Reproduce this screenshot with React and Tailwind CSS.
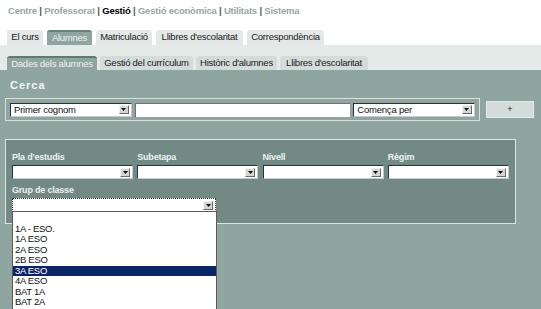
import React from "react";

const NAV = [
  { label: "Centre" },
  { label: "Professorat" },
  { label: "Gestió", active: true },
  { label: "Gestió econòmica" },
  { label: "Utilitats" },
  { label: "Sistema" },
];

const TABS = [
  { label: "El curs", w: "w-[36px]" },
  { label: "Alumnes", w: "w-[45px]", active: true },
  { label: "Matriculació", w: "w-[56px]" },
  { label: "Llibres d'escolaritat", w: "w-[87px]" },
  { label: "Correspondència", w: "w-[77px]" },
];

const SUBTABS = [
  { label: "Dades dels alumnes", w: "w-[90px]", active: true },
  { label: "Gestió del currículum", w: "w-[93px]" },
  { label: "Històric d'alumnes", w: "w-[81px]" },
  { label: "Llibres d'escolaritat", w: "w-[88px]" },
];

const GRUPS = ["", "1A - ESO.", "1A ESO", "2A ESO", "2B ESO", "3A ESO", "4A ESO", "BAT 1A", "BAT 2A", "BAT 1A"];

const Arrow = () => (
  <span className="flex items-center justify-center w-[10px] h-[9px] bg-[#d4d6d2] border-t border-l border-t-[#f0f0f0] border-l-[#f0f0f0] border-b border-r border-b-[#6a6a6a] border-r-[#6a6a6a] shrink-0">
    <svg width="5" height="3" viewBox="0 0 5 3">
      <path d="M0 0h5L2.5 3z" fill="#111" />
    </svg>
  </span>
);

const Select = ({ value = "", className = "", dotted = false }) => (
  <div
    className={`h-[14px] bg-white flex items-center justify-between pl-[3px] pr-[2px] text-[9.5px] tracking-[-0.2px] text-[#111] ${
      dotted
        ? "border border-dotted border-[#2a3258]"
        : "border-t border-l border-t-[#26304e] border-l-[#26304e] border-b border-r border-b-[#c4ccc9] border-r-[#c4ccc9]"
    } ${className}`}
  >
    <span className="leading-none">{value}</span>
    <Arrow />
  </div>
);

export default function App() {
  return (
    <div className="relative w-[541px] h-[309px] overflow-hidden bg-[#8fa5a0] font-['Liberation_Sans',Arial,sans-serif]">
      {/* header */}
      <div className="bg-white h-[45px] flex flex-col justify-between pt-[5px] px-[7px]">
        <div className="pl-[1px] text-[9.5px] font-bold tracking-[-0.2px] leading-[12px] text-[#93aaa4]">
          {NAV.map((n, i) => (
            <React.Fragment key={n.label}>
              {i > 0 && <span className="text-[#555]"> | </span>}
              <span className={n.active ? "text-black" : ""}>{n.label}</span>
            </React.Fragment>
          ))}
        </div>
        <div className="flex items-end gap-[4px]">
          {TABS.map((t) => (
            <div
              key={t.label}
              className={`${t.w} h-[15px] flex items-center justify-center rounded-t-[3px] text-[9.5px] tracking-[-0.25px] whitespace-nowrap ${
                t.active
                  ? "bg-[#8fa59f] text-[#eef2f1] border-t-2 border-[#6c817c]"
                  : "bg-[#e4e9e7] text-[#1a1a1a]"
              }`}
            >
              {t.label}
            </div>
          ))}
        </div>
      </div>

      {/* subtabs band */}
      <div className="bg-[#e4eae8] h-[25px] flex items-end gap-[3px] px-[7px]">
        {SUBTABS.map((t) => (
          <div
            key={t.label}
            className={`${t.w} h-[14px] flex items-center justify-center rounded-t-[3px] text-[9.5px] tracking-[-0.25px] whitespace-nowrap ${
              t.active
                ? "bg-[#8fa59f] text-[#eef2f1] border-t-2 border-[#63786f]"
                : "bg-[#d3dcd9] text-[#1a1a1a]"
            }`}
          >
            {t.label}
          </div>
        ))}
      </div>

      {/* main */}
      <div className="px-[5px] pt-[9px]">
        <div className="pl-[5px] text-[11px] font-bold tracking-[1px] leading-[12px] text-[#f2f5f4]">Cerca</div>

        <div className="mt-[7px] flex items-center gap-[6px]">
          <div className="w-[475px] h-[23px] border border-[#d7e2df] flex items-center gap-[3px] px-[4px]">
            <Select value="Primer cognom" className="w-[122px]" />
            <div className="w-[216px] h-[14px] bg-white border-t border-l border-t-[#6b7472] border-l-[#6b7472]" />
            <Select value="Comença per" className="w-[122px]" />
          </div>
          <button className="w-[48px] h-[17px] bg-[#d3dcd9] border border-[#e2e9e7] text-[9px] leading-none text-[#222]">+</button>
        </div>

        <div className="mt-[18px] w-[511px] h-[85px] bg-[#738984] border border-[#dce6e3] px-[6px] pt-[12px]">
          <div className="grid grid-cols-4 gap-x-[4px] w-[497px]">
            {["Pla d'estudis", "Subetapa", "Nivell", "Règim"].map((l) => (
              <div key={l} className="flex flex-col">
                <span className="text-[9px] font-bold tracking-[-0.2px] leading-[11px] text-[#edf2f0]">{l}</span>
                <Select className="mt-[2px] w-[121px]" />
              </div>
            ))}
          </div>
          <div className="mt-[6px] text-[9px] font-bold tracking-[-0.2px] leading-[11px] text-[#edf2f0]">Grup de classe</div>
          <Select dotted className="mt-[2px] w-[204px]" />
        </div>
      </div>

      {/* open listbox */}
      <div className="absolute left-[12px] top-[211px] w-[205px] bg-white border border-[#5a5a5a] pt-[1px]">
        {GRUPS.map((g, i) => (
          <div
            key={i}
            className={`h-[10.5px] pl-[2px] text-[9.5px] leading-[10.5px] tracking-[-0.3px] ${
              g === "3A ESO" ? "bg-[#0c2566] text-white" : "text-[#111]"
            }`}
          >
            {g}
          </div>
        ))}
      </div>
    </div>
  );
}
